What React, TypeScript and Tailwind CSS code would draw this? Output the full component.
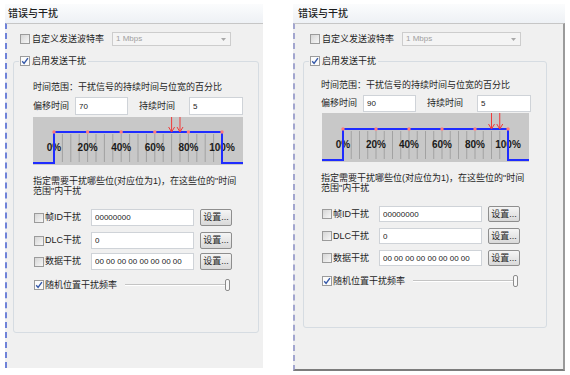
import type { ReactNode } from "react";

type PanelCfg = {
  panel: string;
  header: string;
  content: string;
  padL: string;
  fieldset: string;
  inner: string;
  textMt: string;
  inputsRow: string;
  chart: string;
  chartW: number;
  chartH: number;
  noteMt: string;
  rows: [string, string, string];
  sliderMt: string;
  offset: number;
};

const LEFT: PanelCfg = {
  panel: "ml-[5px] mt-[4px] h-[364px] w-[258px]",
  header: "pl-[3px]",
  content: "border-l-2 [border-left-style:dashed] border-l-[#6f82d8]",
  padL: "pl-[13px]",
  fieldset: "ml-[6px] h-[278px] w-[246px]",
  inner: "pl-[19px]",
  textMt: "mt-[14px]",
  inputsRow: "mt-[4px] h-[18px]",
  chart: "mt-[2px]",
  chartW: 210,
  chartH: 48,
  noteMt: "mt-[11px]",
  rows: ["mt-[13px] h-[17px]", "mt-[6px] h-[17px]", "mt-[4px] h-[17px]"],
  sliderMt: "mt-[9px]",
  offset: 70,
};

const RIGHT: PanelCfg = {
  panel: "ml-[30px] mt-[4px] h-[367px] w-[272px]",
  header: "pl-[5px]",
  content:
    "border-l-2 [border-left-style:dashed] border-l-[#a3a6cf] border-r-2 border-r-[#9a9a9a] border-b-2 border-b-[#7c7c7c]",
  padL: "pl-[15px]",
  fieldset: "ml-[8px] h-[273px] w-[244px]",
  inner: "pl-[17px]",
  textMt: "mt-[12px]",
  inputsRow: "mt-[4px] h-[17px]",
  chart: "ml-[1px] mt-[1px]",
  chartW: 207,
  chartH: 49,
  noteMt: "mt-[11px]",
  rows: ["mt-[13px] h-[16px]", "mt-[6px] h-[16px]", "mt-[6px] h-[16px]"],
  sliderMt: "mt-[9px]",
  offset: 90,
};

function CheckBox({ checked = false }: { checked?: boolean }) {
  return (
    <span
      className={`flex h-[10px] w-[10px] shrink-0 items-center justify-center border border-[#9b9b9b] ${
        checked ? "bg-[#fbfbfb]" : "bg-linear-to-br from-[#d6d6d6] to-[#f7f7f7]"
      }`}
    >
      {checked && (
        <svg width="8" height="8" viewBox="0 0 8 8">
          <path d="M1.2 4.2 L3.1 6.4 L6.9 1.2" fill="none" stroke="#3458a8" strokeWidth="1.4" />
        </svg>
      )}
    </span>
  );
}

function Label({ children, className = "" }: { children: ReactNode; className?: string }) {
  return <span className={`whitespace-nowrap text-[9px] leading-none ${className}`}>{children}</span>;
}

function Field({ value, className = "" }: { value: string; className?: string }) {
  return (
    <input
      readOnly
      value={value}
      className={`border border-[#cfd3d8] bg-white px-[3px] text-[8px] text-[#222] outline-none ${className}`}
    />
  );
}

function BaudSelect() {
  return (
    <div className="flex h-[14px] w-[119px] items-center justify-between border border-[#cdcdcd] bg-[#f4f4f4] pl-[3px] pr-[4px] text-[8px] leading-none text-[#a0a0a0]">
      <span>1 Mbps</span>
      <svg width="5" height="3" viewBox="0 0 5 3">
        <path d="M0 0H5L2.5 3Z" fill="#a8a8a8" />
      </svg>
    </div>
  );
}

function Timeline({ offset, width, height }: { offset: number; width: number; height: number }) {
  const x0 = 21;
  const span = width - 42;
  const top = height - 33;
  const base = height - 2;
  const px = (p: number) => x0 + (p / 100) * span;
  const ticks = Array.from({ length: 19 }, (_, i) => px((i + 1) * 5));
  const marks = [0, 20, 40, 60, 80, 100];

  return (
    <svg width={width} height={height} className="block bg-[#c8c8c8]">
      {ticks.map((x) => (
        <line key={x} x1={x} x2={x} y1={top + 2} y2={base - 1} stroke="#a2a2a2" strokeWidth="1" />
      ))}
      {marks.map((m) => (
        <text
          key={m}
          x={px(m)}
          y={top + 19}
          textAnchor="middle"
          fontSize="10"
          fontWeight="bold"
          fontFamily="'Liberation Sans', sans-serif"
          fill="#1a1a1a"
        >
          {m}%
        </text>
      ))}
      <polyline
        points={`0,${base} ${px(0)},${base} ${px(0)},${top} ${px(100)},${top} ${px(100)},${base} ${width},${base}`}
        fill="none"
        stroke="#1f2cff"
        strokeWidth="2"
      />
      {marks.map((m) => (
        <circle key={m} cx={px(m)} cy={top} r="1.7" fill="#ff7b7b" />
      ))}
      {[offset, offset + 5].map((p) => (
        <g key={p} stroke="#f03a3a" fill="none">
          <line x1={px(p)} x2={px(p)} y1={0} y2={top} />
          <path d={`M${px(p) - 3} ${top - 5} L${px(p)} ${top} L${px(p) + 3} ${top - 5}`} />
        </g>
      ))}
    </svg>
  );
}

function BitRow({ label, value, className }: { label: string; value: string; className: string }) {
  return (
    <div className={`flex items-center ${className}`}>
      <span className="ml-[1px]">
        <CheckBox />
      </span>
      <Label className="ml-[1px] w-[46px]">{label}</Label>
      <Field value={value} className="h-full w-[103px]" />
      <button
        type="button"
        className="ml-[6px] h-full w-[32px] rounded-[2px] border border-[#8e8e8e] bg-linear-to-b from-[#f5f5f5] to-[#d9d9d9] p-0 text-[9px] leading-none text-[#1e1e1e]"
      >
        设置...
      </button>
    </div>
  );
}

function Panel({ cfg }: { cfg: PanelCfg }) {
  return (
    <section className={`flex shrink-0 flex-col ${cfg.panel}`}>
      <header
        className={`h-[19px] shrink-0 bg-linear-to-b from-[#fbfcfd] to-[#eef1f5] text-[10px] font-medium leading-[19px] text-[#1c1c1c] ${cfg.header}`}
      >
        错误与干扰
      </header>
      <div className={`flex-1 border-t border-t-[#c6c6c6] bg-[#f0f0f0] ${cfg.content}`}>
        <div className={`mt-[8px] flex h-[14px] items-center ${cfg.padL}`}>
          <CheckBox />
          <Label className="ml-[2px] w-[80px]">自定义发送波特率</Label>
          <BaudSelect />
        </div>

        <fieldset className={`mt-[9px] rounded-[3px] border border-[#d6dce2] ${cfg.fieldset}`}>
          <legend className="ml-[5px] px-[1px]">
            <span className="flex h-[12px] items-center">
              <CheckBox checked />
              <Label className="ml-[2px] pr-[1px]">启用发送干扰</Label>
            </span>
          </legend>

          <div className={cfg.inner}>
            <div className={`flex h-[12px] items-center ${cfg.textMt}`}>
              <Label>时间范围：干扰信号的持续时间与位宽的百分比</Label>
            </div>

            <div className={`flex items-center ${cfg.inputsRow}`}>
              <Label className="w-[42px]">偏移时间</Label>
              <Field value={String(cfg.offset)} className="h-full w-[53px]" />
              <Label className="ml-[11px] w-[50px]">持续时间</Label>
              <Field value="5" className="h-full w-[54px]" />
            </div>

            <div className={cfg.chart}>
              <Timeline offset={cfg.offset} width={cfg.chartW} height={cfg.chartH} />
            </div>

            <p className={`whitespace-nowrap text-[9px] leading-[10px] ${cfg.noteMt}`}>
              指定需要干扰哪些位(对应位为1)，在这些位的"时间
              <br />
              范围"内干扰
            </p>

            <BitRow label="帧ID干扰" value="00000000" className={cfg.rows[0]} />
            <BitRow label="DLC干扰" value="0" className={cfg.rows[1]} />
            <BitRow label="数据干扰" value="00 00 00 00 00 00 00 00" className={cfg.rows[2]} />

            <div className={`flex h-[12px] items-center ${cfg.sliderMt}`}>
              <span className="ml-[1px]">
                <CheckBox checked />
              </span>
              <Label className="ml-[1px] w-[72px]">随机位置干扰频率</Label>
              <div className="ml-[8px] flex h-[12px] w-[105px] items-center">
                <div className="h-[2px] flex-1 border-b border-b-white bg-[#c4c4c4]" />
                <div className="h-[12px] w-[5px] rounded-[2px] border border-[#8c8c8c] bg-[#f8f8f8]" />
              </div>
            </div>
          </div>
        </fieldset>
      </div>
    </section>
  );
}

export default function App() {
  return (
    <div className="flex h-[375px] w-[570px] items-start overflow-hidden bg-white text-[#1e1e1e] [font-family:'Liberation_Sans','Noto_Sans_CJK_SC',sans-serif]">
      <Panel cfg={LEFT} />
      <Panel cfg={RIGHT} />
    </div>
  );
}
